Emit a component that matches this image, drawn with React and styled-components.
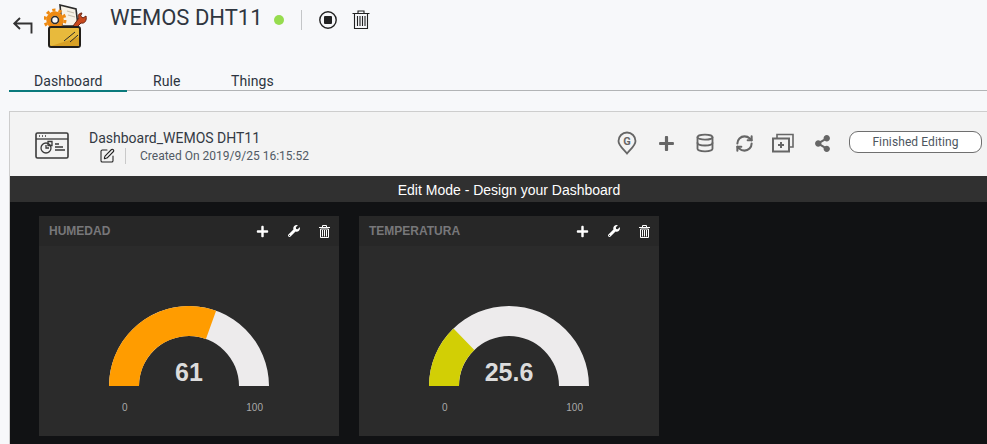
import React from "react";
import styled, {createGlobalStyle} from "styled-components";
import {FaPlus, FaWrench, FaShareAlt} from "react-icons/fa";
import {Database, RefreshCw, SquarePen} from "lucide-react";

const GlobalStyle = createGlobalStyle`
  html, body {
    margin: 0;
    height: 444px;
    overflow: hidden;
    background: #f7f8fa;
    font-family: "Roboto", "Liberation Sans", sans-serif;
  }
`;

const Page = styled.div`
  width: 987px;
  height: 444px;
  overflow: hidden;
`;

const TopBar = styled.header`
  display: flex;
  align-items: flex-start;
  height: 73px;
  padding-left: 12px;
  box-sizing: border-box;
`;

const BackButton = styled.div`
  width: 22px;
  height: 18px;
  margin-top: 17px;
  margin-right: 10px;
`;

const Logo = styled.div`
  width: 46px;
  height: 46px;
  margin-top: 4px;
  margin-right: 20px;
`;

const Title = styled.h1`
  margin: 3px 0 0;
  font-size: 22px;
  line-height: 30px;
  font-weight: 400;
  color: #2f3640;
`;

const StatusDot = styled.span`
  width: 10px;
  height: 10px;
  border-radius: 50%;
  background: #96dc4e;
  margin: 15px 17px 0 11px;
`;

const Divider = styled.span`
  width: 1px;
  height: 20px;
  background: #c4c6c8;
  margin: 10px 17px 0 0;
`;

const TopIcon = styled.div`
  width: 18px;
  height: 20px;
  margin-top: 10px;
  margin-right: 15px;
`;

const Tabs = styled.nav`
  display: flex;
  margin-left: 9px;
  height: 17px;
  border-bottom: 1px solid #b2b4b6;
`;

const Tab = styled.div`
  height: 19px;
  width: ${({$width}) => $width}px;
  padding-left: ${({$pad}) => $pad}px;
  box-sizing: border-box;
  font-size: 14px;
  line-height: 17px;
  letter-spacing: 0.1px;
  color: #2c3440;
  border-bottom: ${({$active}) => ($active ? "2px solid #0a7a7c" : "none")};
`;

const Panel = styled.section`
  margin: 20px -21px 0 9px;
  border: 1px solid #cdcdcd;
  border-bottom: none;
  border-right: none;
`;

const PanelHeader = styled.div`
  display: flex;
  align-items: flex-start;
  height: 64px;
  background: #f3f3f3;
`;

const DashIcon = styled.div`
  width: 34px;
  height: 28px;
  margin: 20px 20px 0 25px;
`;

const Info = styled.div`
  display: flex;
  flex-direction: column;
  padding-top: 17px;
  flex: 1;
`;

const DashName = styled.div`
  font-size: 14px;
  line-height: 18px;
  color: #333a44;
`;

const Meta = styled.div`
  display: flex;
  align-items: center;
  height: 17px;
  padding-left: 10px;
  font-size: 12px;
  color: #515a64;

  svg {
    color: #222;
  }
`;

const MetaRule = styled.span`
  width: 1px;
  height: 16px;
  background: #c9c9c9;
  margin: 0 14px 0 10px;
`;

const Actions = styled.div`
  display: flex;
  align-items: center;
  gap: 17px;
  margin-top: 20px;
  margin-right: 16px;
  color: #666;
`;

const ActionIcon = styled.div`
  display: flex;
  align-items: center;
  justify-content: center;
  width: 22px;
  height: 22px;
`;

const FinishButton = styled.button`
  width: 133px;
  height: 22px;
  margin: 19px 26px 0 0;
  padding: 0;
  border: 1px solid #6f6f6f;
  border-radius: 9px;
  background: #fff;
  color: #4d5660;
  font-family: inherit;
  font-size: 12px;
  letter-spacing: 0.1px;
  line-height: 20px;
`;

const ModeBar = styled.div`
  height: 26px;
  background: #303030;
  color: #fff;
  text-align: center;
  font-family: "Liberation Sans", Arial, sans-serif;
  font-size: 14px;
  line-height: 28px;
`;

const Canvas = styled.div`
  display: flex;
  gap: 20px;
  height: 242px;
  padding: 14px 29px 0;
  box-sizing: border-box;
  background: #111214;
`;

const Card = styled.article`
  display: flex;
  flex-direction: column;
  width: 300px;
  height: 220px;
  background: #2b2b2b;
  font-family: "Liberation Sans", Arial, sans-serif;
`;

const CardHead = styled.div`
  display: flex;
  align-items: center;
  height: 30px;
  padding: 0 9px 0 10px;
  background: #272727;
`;

const CardTitle = styled.div`
  flex: 1;
  font-size: 12px;
  font-weight: 700;
  color: #77777a;
`;

const CardTools = styled.div`
  display: flex;
  align-items: center;
  gap: 19px;
  color: #fff;
`;

const GaugeWrap = styled.div`
  position: relative;
  width: 160px;
  margin: 60px auto 0;
`;

const GaugeSvg = styled.svg`
  display: block;
  width: 160px;
  height: 80px;
`;

const GaugeValue = styled.div`
  position: absolute;
  left: 0;
  right: 0;
  top: 52px;
  text-align: center;
  font-size: 25px;
  line-height: 28px;
  font-weight: 700;
  color: #dcdcdc;
`;

const GaugeScale = styled.div`
  display: flex;
  justify-content: space-between;
  padding: 16px 6px 0 13px;
  font-size: 10px;
  line-height: 12px;
  color: #a9a9a9;
`;

const BackIcon = () => (
  <svg width="22" height="18" viewBox="0 0 22 18" fill="none" stroke="#333" strokeWidth="1.9">
    <path d="M8 1 2.300 6.500 8 12M2.300 6.500H19.500V16.500" />
  </svg>
);

const StopIcon = () => (
  <svg width="18" height="20" viewBox="0 0 18 20">
    <circle cx="9" cy="10" r="8.200" fill="none" stroke="#222" strokeWidth="1.400" />
    <rect x="5" y="6" width="8" height="8" rx="1" fill="#222" />
  </svg>
);

const BigTrash = () => (
  <svg width="18" height="20" viewBox="0 0 18 20" fill="none" stroke="#222" strokeWidth="1.100">
    <path d="M0.500 3.500H17.500M6 3.500V1H12V3.500M2.500 3.500V18.500H15.500V3.500M5.500 6V16M8 6V16M10.500 6V16M13 6V16" />
  </svg>
);

const ToolBox = () => (
  <svg width="46" height="46" viewBox="0 0 46 46">
    <path d="M16 1 32 5 34 22 18 22Z" fill="#f6f1e6" stroke="#2a2a2a" strokeWidth="1.600" />
    <path d="M23 7 30 9M24 11 31 13" stroke="#c8bfae" strokeWidth="1.200" />
    <path d="M29 22 35 14C33 12 35 9 38 9L36.500 12 39 14 42 12C43 16 41 20 37 19L33 23Z" fill="#c94a1e" stroke="#6b2410" strokeWidth="1" />
    <circle cx="11" cy="16" r="6.500" fill="none" stroke="#ee8a12" strokeWidth="4.500" />
    <circle cx="11" cy="16" r="10" fill="none" stroke="#ee8a12" strokeWidth="3" strokeDasharray="3.200 3.100" />
    <circle cx="11" cy="16" r="3.500" fill="#f7f8fa" stroke="#2a2a2a" strokeWidth="1.600" />
    <rect x="5" y="23" width="31" height="20" rx="2" fill="#e8ba3c" stroke="#221f1a" strokeWidth="2" />
    <path d="M7 42 35 33V42Z" fill="#d8a024" />
    <path d="M20 37 31 28M26 38 34 31" stroke="#2a2a2a" strokeWidth="1" />
  </svg>
);

const DashboardIcon = () => (
  <svg width="34" height="28" viewBox="0 0 34 28" fill="none" stroke="#3a3a3a" strokeWidth="1.300">
    <rect x="1" y="1" width="32" height="25" rx="1.500" strokeWidth="1.600" />
    <path d="M1 7H33" />
    <path d="M4 4H5M7 4H8M10 4H11" strokeWidth="1.500" />
    <circle cx="11" cy="16" r="5" />
    <path d="M11 13V16H14M13 9.500H17V13.500H13Z" />
    <path d="M20 12H24M20 15H28M20 18H30" />
  </svg>
);

const PinIcon = () => (
  <svg width="20" height="24" viewBox="0 0 20 24">
    <path d="M10 22.500C6 17.500 1.500 14.500 1.500 10a8.500 8.500 0 0 1 17 0C18.500 14.500 14 17.500 10 22.500Z" fill="none" stroke="#666" strokeWidth="1.800" />
    <text x="10" y="14" textAnchor="middle" fontSize="11" fontWeight="700" fill="#666" fontFamily="Roboto, sans-serif">G</text>
  </svg>
);

const StackPlus = () => (
  <svg width="22" height="20" viewBox="0 0 22 20" fill="none" stroke="#666" strokeWidth="2">
    <path d="M5 5V1.500H21V14H17" strokeWidth="1.600" />
    <rect x="1" y="5.500" width="16" height="13" />
    <path d="M9 9V15M6 12H12" />
  </svg>
);

const CardTrash = () => (
  <svg width="11" height="13" viewBox="0 0 11 13" fill="none" stroke="#fff">
    <path d="M0 2.500H11M3.500 2.500V.5H7.500V2.500" strokeWidth="1" />
    <path d="M1.500 4H9.500V12.500H1.500ZM3.500 5V11.500M5.500 5V11.500M7.500 5V11.500" strokeWidth="1" />
  </svg>
);

const polar = (r, value) => {
  const a = Math.PI * (value / 100);
  return [80 - r * Math.cos(a), 80 - r * Math.sin(a)];
};

const arc = (from, to) => {
  const [x1, y1] = polar(80, from);
  const [x2, y2] = polar(80, to);
  const [x3, y3] = polar(50, to);
  const [x4, y4] = polar(50, from);
  return `M${x1} ${y1}A80 80 0 0 1 ${x2} ${y2}L${x3} ${y3}A50 50 0 0 0 ${x4} ${y4}Z`;
};

const Gauge = ({value, percent, color}) => (
  <GaugeWrap>
    <GaugeSvg viewBox="0 0 160 80">
      <path d={arc(0, 100)} fill="#edebec" />
      <path d={arc(0, percent)} fill={color} />
    </GaugeSvg>
    <GaugeValue>{value}</GaugeValue>
    <GaugeScale>
      <span>0</span>
      <span>100</span>
    </GaugeScale>
  </GaugeWrap>
);

const GaugeCard = ({title, value, percent, color}) => (
  <Card>
    <CardHead>
      <CardTitle>{title}</CardTitle>
      <CardTools>
        <FaPlus size={13} />
        <FaWrench size={12} />
        <CardTrash />
      </CardTools>
    </CardHead>
    <Gauge value={value} percent={percent} color={color} />
  </Card>
);

const App = () => (
  <Page>
    <GlobalStyle />
    <TopBar>
      <BackButton>
        <BackIcon />
      </BackButton>
      <Logo>
        <ToolBox />
      </Logo>
      <Title>WEMOS DHT11</Title>
      <StatusDot />
      <Divider />
      <TopIcon>
        <StopIcon />
      </TopIcon>
      <TopIcon>
        <BigTrash />
      </TopIcon>
    </TopBar>

    <Tabs>
      <Tab $width={118} $pad={25} $active>
        Dashboard
      </Tab>
      <Tab $width={78} $pad={26}>
        Rule
      </Tab>
      <Tab $width={100} $pad={26}>
        Things
      </Tab>
    </Tabs>

    <Panel>
      <PanelHeader>
        <DashIcon>
          <DashboardIcon />
        </DashIcon>
        <Info>
          <DashName>Dashboard_WEMOS DHT11</DashName>
          <Meta>
            <SquarePen size={16} strokeWidth={1.6} />
            <MetaRule />
            Created On 2019/9/25 16:15:52
          </Meta>
        </Info>
        <Actions>
          <ActionIcon>
            <PinIcon />
          </ActionIcon>
          <ActionIcon>
            <FaPlus size={17} />
          </ActionIcon>
          <ActionIcon>
            <Database size={20} strokeWidth={2.2} />
          </ActionIcon>
          <ActionIcon>
            <RefreshCw size={19} strokeWidth={2.6} />
          </ActionIcon>
          <ActionIcon>
            <StackPlus />
          </ActionIcon>
          <ActionIcon>
            <FaShareAlt size={17} />
          </ActionIcon>
        </Actions>
        <FinishButton>Finished Editing</FinishButton>
      </PanelHeader>
      <ModeBar>Edit Mode - Design your Dashboard</ModeBar>
      <Canvas>
        <GaugeCard title="HUMEDAD" value="61" percent={61} color="#ff9c00" />
        <GaugeCard title="TEMPERATURA" value="25.6" percent={25.6} color="#d2cf05" />
      </Canvas>
    </Panel>
  </Page>
);

export default App;
